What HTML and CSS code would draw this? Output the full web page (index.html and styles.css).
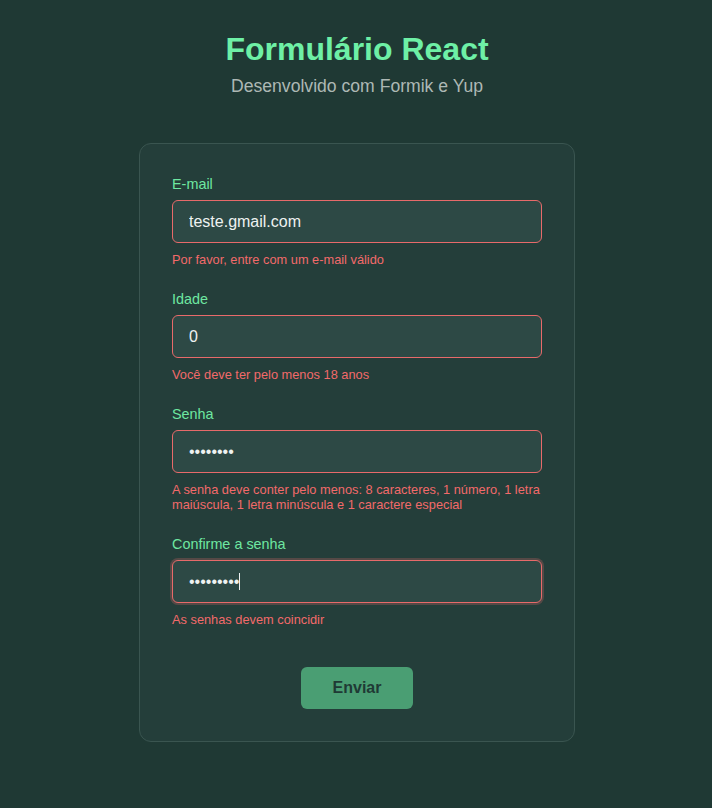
FILE: index.html
```html
<!DOCTYPE html>
<html lang="pt-BR">
<head>
<meta charset="utf-8">
<title>Formulário React</title>
<link rel="stylesheet" href="styles.css">
</head>
<body>
<header class="header">
  <h1 class="title">Formulário React</h1>
  <p class="subtitle">Desenvolvido com Formik e Yup</p>
</header>
<form class="card" onsubmit="return false">
  <div class="field">
    <label class="label" for="email">E-mail</label>
    <input class="input" id="email" type="text" value="teste.gmail.com">
    <p class="error">Por favor, entre com um e-mail válido</p>
  </div>
  <div class="field">
    <label class="label" for="idade">Idade</label>
    <input class="input" id="idade" type="text" value="0">
    <p class="error">Você deve ter pelo menos 18 anos</p>
  </div>
  <div class="field">
    <label class="label" for="senha">Senha</label>
    <input class="input" id="senha" type="password" value="12345678">
    <p class="error">A senha deve conter pelo menos: 8 caracteres, 1 número, 1 letra maiúscula, 1 letra minúscula e 1 caractere especial</p>
  </div>
  <div class="field">
    <label class="label" for="confirma">Confirme a senha</label>
    <div class="input-wrap">
      <input class="input input-focus" id="confirma" type="password" value="123456789">
      <span class="caret"></span>
    </div>
    <p class="error">As senhas devem coincidir</p>
  </div>
  <div class="actions">
    <button class="button" type="submit">Enviar</button>
  </div>
</form>
</body>
</html>
```
FILE: styles.css
```css
* { box-sizing: border-box; }
html, body { margin: 0; padding: 0; }
body {
  background: #1f3934;
  font-family: "Liberation Sans", Arial, sans-serif;
  min-height: 808px;
  padding-top: 29px;
  padding-left: 2px;
}
.header { text-align: center; }
.title {
  margin: 0;
  font-size: 32px;
  line-height: 40px;
  font-weight: 700;
  color: #6ef0a6;
}
.subtitle {
  margin: 6px 0 0;
  font-size: 17.6px;
  line-height: 22px;
  color: #adb8b4;
}
.card {
  width: 436px;
  margin: 46px auto 0;
  background: #243e3a;
  border: 1px solid #3a5550;
  border-radius: 12px;
  padding: 32px 32px 32px;
}
.field { margin-bottom: 24px; }
.label {
  display: block;
  font-size: 14.4px;
  line-height: 17px;
  color: #6ee7a1;
  margin-bottom: 7px;
}
.input-wrap { position: relative; }
.input {
  display: block;
  width: 100%;
  height: 43px;
  background: #2d4945;
  border: 1px solid #e86a6a;
  border-radius: 6px;
  padding: 0 16px;
  font-family: "Liberation Sans", Arial, sans-serif;
  font-size: 16px;
  color: #eef2f1;
  outline: none;
}
.input-focus { box-shadow: 0 0 0 2px rgba(232, 106, 106, 0.25); }
.caret {
  position: absolute;
  left: 67px;
  top: 13px;
  width: 1px;
  height: 17px;
  background: #eef2f1;
}
.error {
  margin: 9px 0 0;
  font-size: 12.8px;
  line-height: 15px;
  color: #f26a6a;
}
.actions {
  display: flex;
  justify-content: center;
  padding-top: 16px;
}
.button {
  width: 112px;
  height: 42px;
  border: none;
  border-radius: 6px;
  background: #4a9e73;
  color: #1f3a35;
  font-family: "Liberation Sans", Arial, sans-serif;
  font-size: 16px;
  font-weight: 700;
}
```
